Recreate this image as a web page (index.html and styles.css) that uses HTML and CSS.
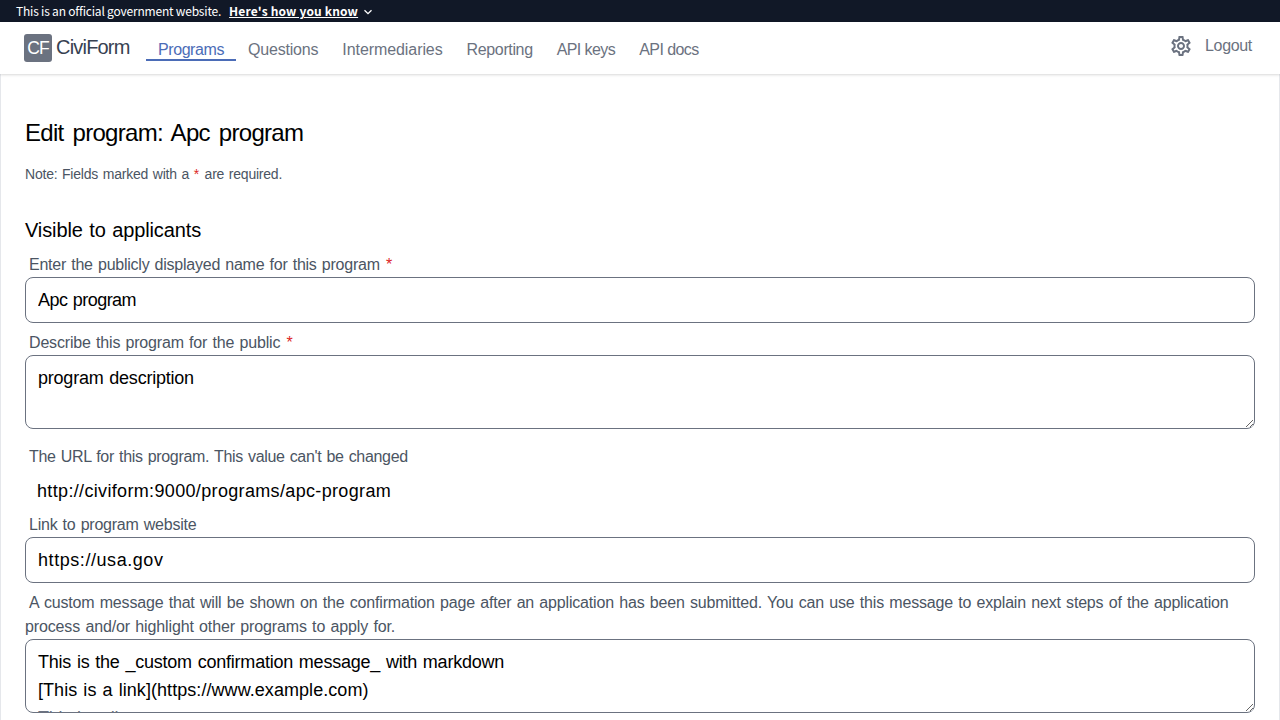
FILE: index.html
```
<!DOCTYPE html>
<html lang="en">
<head>
<meta charset="utf-8">
<title>Edit program: Apc program</title>
<link rel="stylesheet" href="styles.css">
</head>
<body>
<header class="banner">
  <span class="banner-text">This is an official government website.</span>
  <a class="banner-link">Here's how you know</a>
  <svg class="chevron" viewBox="0 0 10 10"><path d="M1.500 3.200 5 6.700l3.500-3.500"/></svg>
</header>
<nav class="topbar">
  <div class="brand"><span class="logo">CF</span><span class="brand-name">CiviForm</span></div>
  <div class="links">
    <a class="link active fit-d">Programs</a>
    <a class="link fit-b">Questions</a>
    <a class="link fit-a">Intermediaries</a>
    <a class="link fit-c">Reporting</a>
    <a class="link fit-e">API keys</a>
    <a class="link fit-e">API docs</a>
  </div>
  <div class="account">
    <svg class="gear" viewBox="0 0 24 24"><path d="M19.430 12.980c.04-.32.07-.64.07-.98s-.03-.66-.07-.98l2.110-1.650c.19-.15.24-.42.12-.64l-2-3.460c-.09-.16-.26-.25-.44-.25-.06 0-.12.01-.17.03l-2.490 1c-.52-.4-1.080-.73-1.690-.98l-.38-2.650C14.460 2.180 14.250 2 14 2h-4c-.25 0-.46.18-.49.42l-.38 2.650c-.61.25-1.170.59-1.690.98l-2.490-1c-.06-.02-.12-.03-.18-.03-.17 0-.34.09-.43.25l-2 3.460c-.13.22-.07.49.12.64l2.110 1.650c-.04.32-.07.65-.07.98s.03.66.07.98l-2.110 1.650c-.19.15-.24.42-.12.64l2 3.460c.09.16.26.25.44.25.06 0 .12-.01.17-.03l2.490-1c.52.4 1.080.73 1.690.98l.38 2.650c.03.24.24.42.49.42h4c.25 0 .46-.18.49-.42l.38-2.650c.61-.25 1.170-.59 1.690-.98l2.490 1c.06.02.12.03.18.03.17 0 .34-.09.43-.25l2-3.460c.12-.22.07-.49-.12-.64l-2.110-1.650zm-1.980-1.710c.04.31.05.52.05.73s-.02.43-.05.73l-.14 1.130.89.7 1.080.84-.7 1.210-1.270-.51-1.040-.42-.9.68c-.43.32-.84.56-1.250.73l-1.060.43-.16 1.130-.2 1.350h-1.400l-.19-1.350-.16-1.130-1.060-.43c-.43-.18-.83-.41-1.230-.71l-.91-.7-1.060.43-1.270.51-.7-1.210 1.080-.84.89-.7-.14-1.130c-.03-.31-.05-.54-.05-.74s.02-.43.05-.73l.14-1.130-.89-.7-1.080-.84.7-1.210 1.270.51 1.040.42.9-.68c.43-.32.84-.56 1.250-.73l1.060-.43.16-1.130.2-1.350h1.390l.19 1.350.16 1.130 1.060.43c.43.18.83.41 1.230.71l.91.7 1.060-.43 1.270-.51.7 1.210-1.070.85-.89.7.14 1.130zM12 8c-2.210 0-4 1.790-4 4s1.790 4 4 4 4-1.790 4-4-1.790-4-4-4zm0 6c-1.100 0-2-.9-2-2s.9-2 2-2 2 .9 2 2-.9 2-2 2z"/></svg>
    <a class="logout">Logout</a>
  </div>
</nav>
<main class="page">
  <h1 class="title">Edit program: Apc program</h1>
  <p class="note">Note: Fields marked with a <span class="req">*</span> are required.</p>
  <h2 class="section">Visible to applicants</h2>
  <form class="form">
    <div class="field">
      <label class="label fit-label-b">Enter the publicly displayed name for this program <span class="req">*</span></label>
      <input class="input fit-title" type="text" value="Apc program">
    </div>
    <div class="field">
      <label class="label fit-label-a">Describe this program for the public <span class="req">*</span></label>
      <textarea class="input area" rows="2">program description</textarea>
    </div>
    <div class="field spaced">
      <label class="label fit-label-c">The URL for this program. This value can't be changed</label>
      <p class="static fit-url">http://civiform:9000/programs/apc-program</p>
    </div>
    <div class="field">
      <label class="label fit-label-b">Link to program website</label>
      <input class="input fit-site" type="text" value="https://usa.gov">
    </div>
    <div class="field">
      <label class="label fit-label-a">A custom message that will be shown on the confirmation page after an application has been submitted. You can use this message to explain next steps of the application <span class="fit-label-d">process and/or highlight other programs to apply for.</span></label>
      <div class="input area" contenteditable="true" spellcheck="false"><div>This is the _custom confirmation message_ with markdown</div><div class="fit-link">[This is a link](https://www.example.com)</div><div class="clipped">This is a list:</div></div>
    </div>
  </form>
</main>
</body>
</html>
```
FILE: styles.css
```
* { box-sizing: border-box; }
html { overflow: hidden; }
body {
  margin: 0;
  height: 720px;
  overflow: hidden;
  display: flex;
  flex-direction: column;
  background: #fff;
  font-family: "Liberation Sans", Arial, sans-serif;
  font-size: 16px;
  line-height: 24px;
  color: #000;
}
h1, h2, p { margin: 0; font-weight: 400; }

.banner {
  flex: none;
  display: flex;
  align-items: center;
  height: 22px;
  padding-left: 16px;
  background: #111827;
  color: #fff;
  font: 12px/22px "Noto Sans CJK JP", sans-serif;
}
.banner-text { letter-spacing: -0.2px; }
.banner-link {
  margin-left: 8px;
  font-weight: 700;
  letter-spacing: 0.16px;
  text-decoration: underline;
}
.chevron {
  width: 10px;
  height: 10px;
  margin: 2px 0 0 5px;
  fill: none;
  stroke: #fff;
  stroke-width: 1.3;
}

.topbar {
  position: relative;
  flex: none;
  display: flex;
  align-items: flex-start;
  height: 52px;
  padding: 0 28px 0 24px;
  box-shadow: 0 1px 3px rgba(0, 0, 0, 0.1), 0 1px 2px rgba(0, 0, 0, 0.06);
  background: #fff;
  color: #6b7280;
}
.brand { display: flex; width: 122px; padding-top: 12px; }
.logo {
  width: 28px;
  height: 28px;
  border-radius: 3px;
  background: #6b7280;
  color: #fff;
  font-size: 17.5px;
  line-height: 29px;
  letter-spacing: -1px;
  text-align: center;
}
.brand-name {
  margin-left: 4px;
  color: #374151;
  font-size: 20px;
  line-height: 27px;
  letter-spacing: -0.8px;
}
.links { display: flex; padding-top: 15px; }
.link {
  height: 24px;
  padding: 0 12px;
  line-height: 25px;
  white-space: nowrap;
}
.active { border-bottom: 2px solid #4b6cb7; color: #4b6cb7; }
.account { display: flex; margin-left: auto; padding-top: 12px; }
.gear { width: 24px; height: 24px; fill: #6b7280; }
.logout { margin-left: 12px; letter-spacing: -0.32px; }

.page {
  flex: 1;
  min-height: 0;
  overflow: hidden;
  padding: 43px 24px 0;
  border: 1px solid #e5e7eb;
  border-width: 0 1px;
}
.title {
  font-size: 24px;
  line-height: 32px;
  letter-spacing: -0.7px;
  word-spacing: 3px;
}
.note {
  margin-top: 15px;
  color: #4b5563;
  font-size: 14px;
  line-height: 20px;
  letter-spacing: -0.22px;
  word-spacing: 1px;
}
.req { margin-right: 1px; color: #dc2626; }
.section {
  margin-top: 32px;
  font-size: 20px;
  line-height: 28px;
  letter-spacing: -0.11px;
  word-spacing: 1px;
}
.form { margin-top: 9px; }
.field { display: flex; flex-direction: column; margin-bottom: 8px; }
.spaced { margin-top: 16px; }
.label {
  color: #4b5563;
  text-indent: 4px;
  word-spacing: 1px;
}
.label .req { margin-left: 1px; }
.input {
  width: 100%;
  margin: 0;
  padding: 8px 12px;
  border: 1px solid #6b7280;
  border-radius: 8px;
  outline: 0;
  background: #fff;
  color: #000;
  font-family: inherit;
  font-size: 18px;
  line-height: 28px;
  height: 46px;
  letter-spacing: -0.22px;
  word-spacing: 1px;
}
.area { height: 74px; overflow: hidden; resize: vertical; }
.clipped { color: #6b7280; }
.static {
  margin-top: 8px;
  padding-left: 12px;
  font-size: 18px;
  line-height: 28px;
}

/* Tracking steps */
.fit-a { letter-spacing: -0.08px; }
.fit-b { letter-spacing: -0.19px; }
.fit-c { letter-spacing: -0.37px; }
.fit-d { letter-spacing: -0.42px; }
.fit-e { letter-spacing: -0.57px; }
.fit-label-a { letter-spacing: -0.175px; }
.fit-label-b { letter-spacing: -0.24px; }
.fit-label-c { letter-spacing: -0.33px; }
.fit-label-d { letter-spacing: -0.13px; }
.fit-title { letter-spacing: -0.55px; }
.fit-link { letter-spacing: 0.06px; }
.fit-url { letter-spacing: 0.34px; }
.fit-site { letter-spacing: 0.56px; }
```
